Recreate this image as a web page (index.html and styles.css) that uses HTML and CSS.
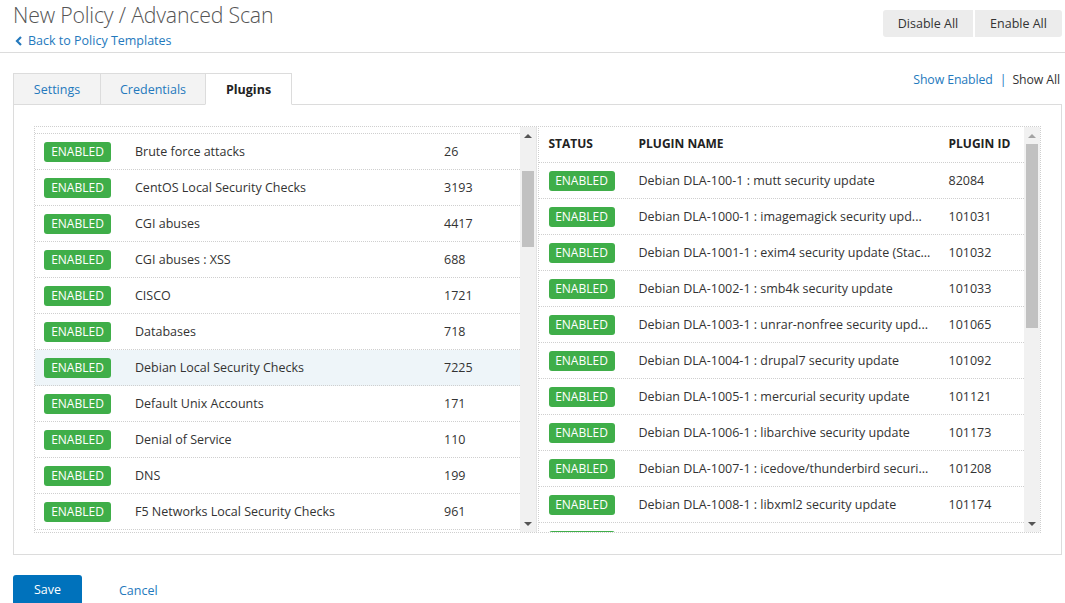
FILE: index.html
```html
<!DOCTYPE html>
<html>
<head>
<meta charset="utf-8">
<link rel="stylesheet" href="styles.css">
</head>
<body>
<header class="topbar">
  <div class="titles">
    <h1 class="title">New Policy / Advanced Scan</h1>
    <a class="back" href="#"><svg class="chev" width="8" height="10" viewBox="0 0 8 10"><path d="M6 1 L2 5 L6 9" fill="none" stroke="currentColor" stroke-width="2.2"/></svg>Back to Policy Templates</a>
  </div>
  <div class="btn-group">
    <button class="gbtn">Disable All</button>
    <button class="gbtn">Enable All</button>
  </div>
</header>

<div class="tabrow">
  <div class="tabs">
    <div class="tab">Settings</div>
    <div class="tab">Credentials</div>
    <div class="tab active">Plugins</div>
  </div>
  <div class="filters"><a href="#" class="flink">Show Enabled</a><span class="sep">|</span><span class="fcur">Show All</span></div>
</div>

<section class="panel">
  <div class="families">
    <div class="list">
      <div class="spacer"></div>
      <div class="row"><span class="badge">ENABLED</span><span class="fname">Brute force attacks</span><span class="fcount">26</span></div>
      <div class="row"><span class="badge">ENABLED</span><span class="fname">CentOS Local Security Checks</span><span class="fcount">3193</span></div>
      <div class="row"><span class="badge">ENABLED</span><span class="fname">CGI abuses</span><span class="fcount">4417</span></div>
      <div class="row"><span class="badge">ENABLED</span><span class="fname">CGI abuses : XSS</span><span class="fcount">688</span></div>
      <div class="row"><span class="badge">ENABLED</span><span class="fname">CISCO</span><span class="fcount">1721</span></div>
      <div class="row"><span class="badge">ENABLED</span><span class="fname">Databases</span><span class="fcount">718</span></div>
      <div class="row sel"><span class="badge">ENABLED</span><span class="fname">Debian Local Security Checks</span><span class="fcount">7225</span></div>
      <div class="row"><span class="badge">ENABLED</span><span class="fname">Default Unix Accounts</span><span class="fcount">171</span></div>
      <div class="row"><span class="badge">ENABLED</span><span class="fname">Denial of Service</span><span class="fcount">110</span></div>
      <div class="row"><span class="badge">ENABLED</span><span class="fname">DNS</span><span class="fcount">199</span></div>
      <div class="row"><span class="badge">ENABLED</span><span class="fname">F5 Networks Local Security Checks</span><span class="fcount">961</span></div>
    </div>
    <div class="sbar">
      <div class="arr up"></div>
      <div class="track"><div class="thumb thumb-l"></div></div>
      <div class="arr down"></div>
    </div>
  </div>

  <div class="plugins">
    <div class="list">
      <div class="prow head"><span class="c1">STATUS</span><span class="c2">PLUGIN NAME</span><span class="c3">PLUGIN ID</span></div>
      <div class="prow"><span class="c1"><span class="badge sm">ENABLED</span></span><span class="c2">Debian DLA-100-1 : mutt security update</span><span class="c3">82084</span></div>
      <div class="prow"><span class="c1"><span class="badge sm">ENABLED</span></span><span class="c2">Debian DLA-1000-1 : imagemagick security upd...</span><span class="c3">101031</span></div>
      <div class="prow"><span class="c1"><span class="badge sm">ENABLED</span></span><span class="c2">Debian DLA-1001-1 : exim4 security update (Stac...</span><span class="c3">101032</span></div>
      <div class="prow"><span class="c1"><span class="badge sm">ENABLED</span></span><span class="c2">Debian DLA-1002-1 : smb4k security update</span><span class="c3">101033</span></div>
      <div class="prow"><span class="c1"><span class="badge sm">ENABLED</span></span><span class="c2">Debian DLA-1003-1 : unrar-nonfree security upd...</span><span class="c3">101065</span></div>
      <div class="prow"><span class="c1"><span class="badge sm">ENABLED</span></span><span class="c2">Debian DLA-1004-1 : drupal7 security update</span><span class="c3">101092</span></div>
      <div class="prow"><span class="c1"><span class="badge sm">ENABLED</span></span><span class="c2">Debian DLA-1005-1 : mercurial security update</span><span class="c3">101121</span></div>
      <div class="prow"><span class="c1"><span class="badge sm">ENABLED</span></span><span class="c2">Debian DLA-1006-1 : libarchive security update</span><span class="c3">101173</span></div>
      <div class="prow"><span class="c1"><span class="badge sm">ENABLED</span></span><span class="c2">Debian DLA-1007-1 : icedove/thunderbird securi...</span><span class="c3">101208</span></div>
      <div class="prow"><span class="c1"><span class="badge sm">ENABLED</span></span><span class="c2">Debian DLA-1008-1 : libxml2 security update</span><span class="c3">101174</span></div>
      <div class="prow"><span class="c1"><span class="badge sm"></span></span></div>
    </div>
    <div class="sbar">
      <div class="arr up"></div>
      <div class="track"><div class="thumb thumb-r"></div></div>
      <div class="arr down"></div>
    </div>
  </div>
</section>

<footer class="actions">
  <button class="save">Save</button>
  <a href="#" class="cancel">Cancel</a>
</footer>
</body>
</html>
```

FILE: styles.css
```css
* { box-sizing: border-box; }
html, body { margin: 0; padding: 0; background: #fff; }
body {
  font-family: "Open Sans", "Noto Sans", sans-serif;
  font-size: 12.5px;
  color: #333;
  width: 1065px;
  height: 603px;
  overflow: hidden;
}
a { text-decoration: none; color: #2479bd; }

.topbar {
  display: flex;
  justify-content: space-between;
  height: 53px;
  border-bottom: 1px solid #dcdcdc;
  padding: 0 3px 0 13px;
}
.title {
  margin: 0;
  font-weight: 300;
  font-size: 21.3px;
  line-height: 29px;
  color: #555;
  letter-spacing: -0.2px;
}
.back {
  display: flex;
  align-items: center;
  gap: 5px;
  margin-top: 4px;
  padding-left: 2px;
  font-size: 12.5px;
  line-height: 16px;
}
.chev { display: block; }
.btn-group { display: flex; gap: 2px; padding-top: 10px; }
.gbtn {
  height: 27px;
  border: 0;
  background: #ececec;
  color: #333;
  font-family: inherit;
  font-size: 12.5px;
  padding: 0;
  border-radius: 3px;
}
.gbtn:first-child { width: 90px; border-radius: 3px 0 0 3px; }
.gbtn:last-child { width: 87px; border-radius: 0 3px 3px 0; }

.tabrow {
  display: flex;
  justify-content: space-between;
  align-items: flex-start;
  margin-top: 20px;
  padding: 0 5px 0 13px;
}
.tabs { display: flex; }
.tab {
  height: 32px;
  line-height: 32px;
  border: 1px solid #dcdcdc;
  border-right: 0;
  background: #f3f3f3;
  color: #2479bd;
  text-align: center;
  font-size: 12.5px;
}
.tab:nth-child(1) { width: 87px; }
.tab:nth-child(2) { width: 105px; }
.tab:nth-child(3) { width: 87px; border-right: 1px solid #dcdcdc; }
.tab.active {
  background: #fff;
  color: #222;
  font-weight: 700;
  position: relative;
  z-index: 1;
  border-bottom-color: #fff;
}
.filters { display: flex; align-items: center; line-height: 14px; font-size: 12.3px; letter-spacing: -0.1px; }
.sep { color: #2479bd; margin: 0 6px 0 7px; }
.fcur { color: #333; }

.panel {
  margin: -1px 3px 0 13px;
  height: 451px;
  border: 1px solid #dcdcdc;
  padding: 21px 20px 20px 20px;
  display: flex;
  gap: 1px;
}
.families, .plugins {
  display: flex;
  height: 407px;
  overflow: hidden;
  border-top: 1px dotted #cfcfcf;
  border-bottom: 1px dotted #cfcfcf;
  border-left: 1px dotted #cfcfcf;
}
.families { width: 503px; }
.plugins { width: 504px; border-right: 1px dotted #cfcfcf; }
.list { flex: 1; overflow: hidden; }
.spacer { height: 7px; border-bottom: 1px dotted #cfcfcf; }
.row {
  display: flex;
  align-items: center;
  height: 36px;
  border-bottom: 1px dotted #cfcfcf;
  padding-left: 9px;
}
.row.sel { background: #eef5f9; }
.badge {
  display: inline-block;
  width: 67px;
  height: 20px;
  line-height: 20px;
  border-radius: 3px;
  background: #3fae49;
  color: #fff;
  text-align: center;
  font-size: 12px;
  vertical-align: middle;
}
.badge.sm { width: 66px; }
.fname { width: 333px; padding-left: 24px; }

.prow {
  display: flex;
  align-items: center;
  height: 36px;
  border-bottom: 1px dotted #cfcfcf;
  padding-left: 10px;
  flex-shrink: 0;
}
.prow.head { font-weight: 700; font-size: 12px; color: #222; padding-bottom: 2px; }
.c1 { width: 90px; display: flex; }
.c2 { width: 310px; white-space: nowrap; overflow: hidden; }

.sbar {
  width: 17px;
  flex-shrink: 0;
  background: #f1f1f1;
  display: flex;
  flex-direction: column;
  border-right: 1px solid #e4e4e4;
}
.plugins .sbar { width: 16px; border-right: 0; }
.arr { height: 17px; display: flex; align-items: center; justify-content: center; }
.arr::before {
  content: "";
  border-left: 4px solid transparent;
  border-right: 4px solid transparent;
}
.arr.up::before { border-bottom: 4px solid #555; }
.arr.down::before { border-top: 4px solid #555; }
.plugins .arr.up::before { border-bottom-color: #a3a3a3; }
.track { flex: 1; padding: 0 2px; }
.thumb { background: #c1c1c1; }
.thumb-l { margin-top: 27px; height: 76px; }
.thumb-r { margin-top: 0; height: 184px; }

.actions {
  display: flex;
  align-items: center;
  gap: 37px;
  padding: 20px 13px 0;
}
.save {
  width: 69px;
  height: 30px;
  border: 0;
  border-radius: 3px;
  background: #0072bc;
  color: #fff;
  font-family: inherit;
  font-size: 12.5px;
  padding-bottom: 2px;
}
.cancel { font-size: 12.5px; }
```
